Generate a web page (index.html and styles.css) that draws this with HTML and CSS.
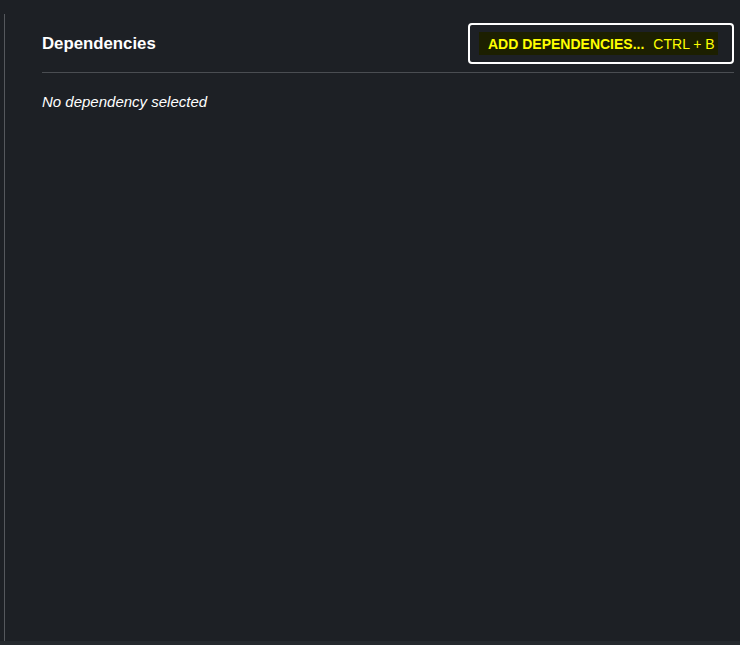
FILE: index.html
```html
<!DOCTYPE html>
<html lang="en">
<head>
<meta charset="utf-8">
<title>Dependencies</title>
<link rel="stylesheet" href="styles.css">
</head>
<body>
<div class="page">
  <section class="panel">
    <header class="panel-header">
      <h2 class="panel-title">Dependencies</h2>
      <button class="add-btn" type="button"><span class="add-btn-label"><span class="add-btn-text">ADD DEPENDENCIES...</span><span class="add-btn-shortcut">CTRL + B</span></span></button>
    </header>
    <p class="empty">No dependency selected</p>
  </section>
  <div class="footer-strip"></div>
</div>
</body>
</html>
```

FILE: styles.css
```css
* { box-sizing: border-box; }
html, body {
  margin: 0;
  padding: 0;
  height: 100%;
}
body {
  background: #1d2025;
  font-family: "Liberation Sans", Arial, sans-serif;
  color: #ffffff;
}
.page {
  height: 645px;
  display: flex;
  flex-direction: column;
  padding-top: 14px;
}
.panel {
  flex: 1;
  margin-left: 4px;
  border-left: 1px solid #55585d;
  padding: 9px 6px 0 37px;
}
.panel-header {
  display: flex;
  justify-content: space-between;
  align-items: center;
  padding-bottom: 8px;
  border-bottom: 1px solid #4a4d52;
}
.panel-title {
  margin: 0;
  font-size: 16.8px;
  font-weight: bold;
  color: #ffffff;
}
.add-btn {
  width: 266px;
  height: 41px;
  border: 2px solid #ffffff;
  border-radius: 4px;
  background: #1d2025;
  padding: 0 0 0 9px;
  display: flex;
  align-items: center;
  font-family: "Liberation Sans", Arial, sans-serif;
  font-size: 14px;
  color: #ffff00;
  cursor: pointer;
}
.add-btn-label {
  display: flex;
  align-items: center;
  height: 23px;
  padding: 0 3px 0 9px;
  background: #1c1f00;
}
.add-btn-text {
  font-weight: bold;
  margin-right: 9px;
}
.add-btn-shortcut {
  font-weight: normal;
}
.empty {
  margin: 20px 0 0 0;
  font-size: 15px;
  font-style: italic;
  color: #ffffff;
}
.footer-strip {
  height: 4px;
  background: #25292e;
}
```
